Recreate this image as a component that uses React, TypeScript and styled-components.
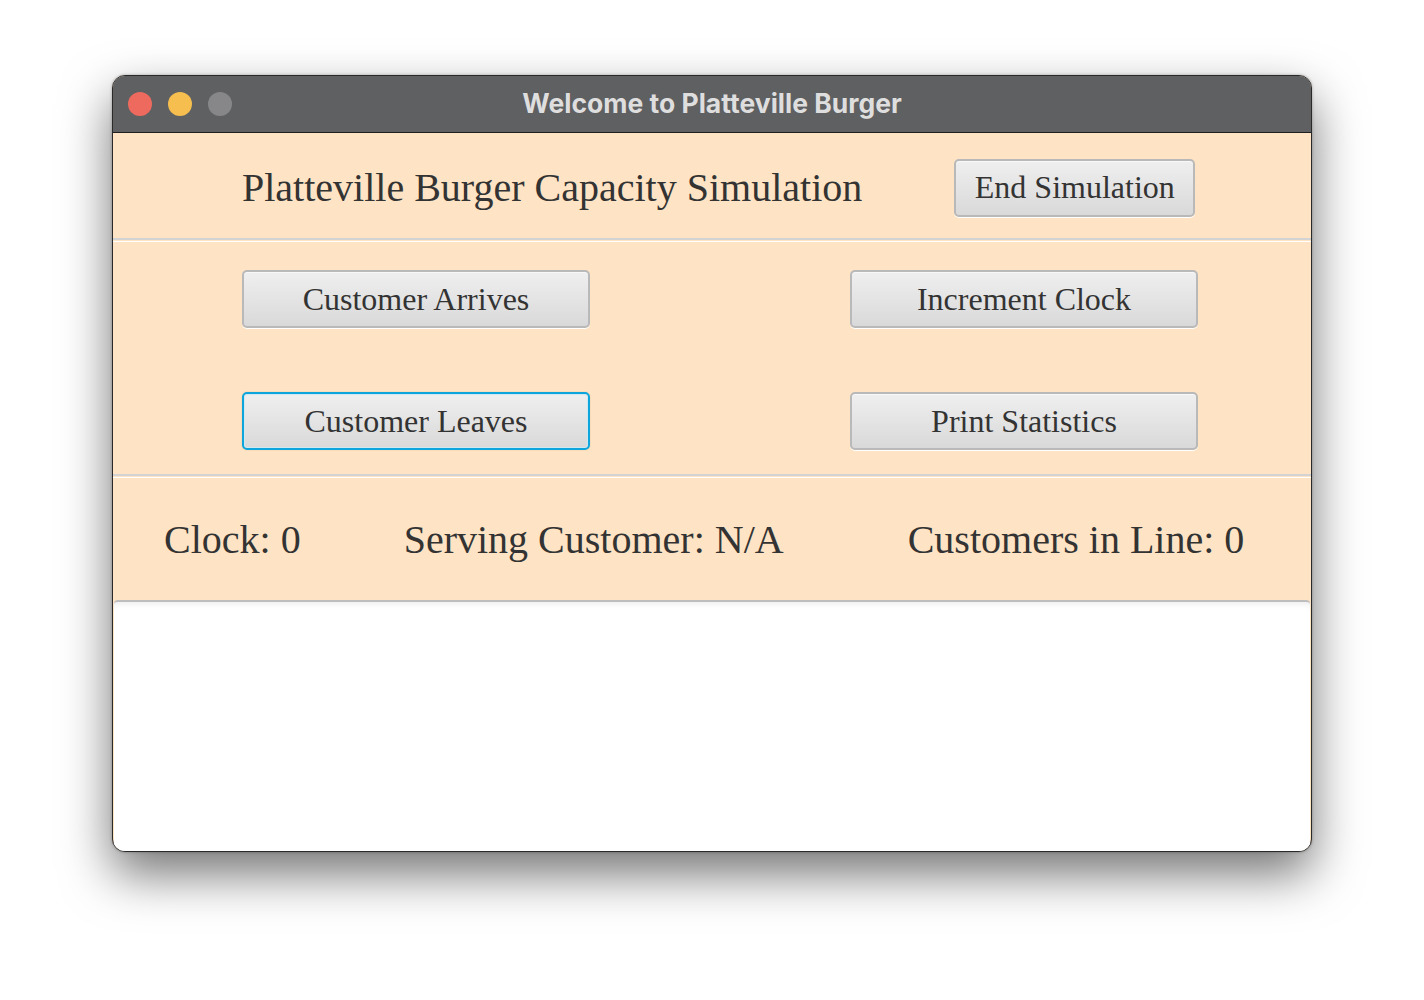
import React from "react";
import styled, { createGlobalStyle } from "styled-components";

const Global = createGlobalStyle`
  html, body { margin: 0; padding: 0; background: #ffffff; }
  #root { width: 1424px; height: 1000px; }
`;

const Stage = styled.div`
  width: 1424px;
  height: 1000px;
  box-sizing: border-box;
  padding: 75px 112px 0 112px;
  background: #ffffff;
`;

const Window = styled.div`
  width: 1200px;
  height: 777px;
  box-sizing: border-box;
  border: 1px solid #2a2a2a;
  border-radius: 13px;
  overflow: hidden;
  display: flex;
  flex-direction: column;
  background: #fee3c4;
  box-shadow: 0 22px 50px rgba(0, 0, 0, 0.55), 0 0 3px rgba(0, 0, 0, 0.3);
`;

const TitleBar = styled.div`
  height: 56px;
  flex: none;
  background: #5f6062;
  border-bottom: 1px solid #1e1e1e;
  display: flex;
  align-items: center;
  position: relative;
  padding-left: 15px;
  gap: 16px;
`;

const Light = styled.span<{ $c: string }>`
  width: 24px;
  height: 24px;
  border-radius: 50%;
  background: ${(p) => p.$c};
`;

const Title = styled.div`
  position: absolute;
  left: 0;
  right: 0;
  top: 0;
  bottom: 0;
  display: flex;
  align-items: center;
  justify-content: center;
  font-family: Inter, "Open Sans", sans-serif;
  font-weight: 700;
  font-size: 26.5px;
  color: #dedede;
  padding-bottom: 2px;
`;

const serif = `"Liberation Serif", "Times New Roman", serif`;

const HeaderRow = styled.div`
  height: 105px;
  flex: none;
  box-sizing: border-box;
  display: flex;
  align-items: center;
  padding: 4px 0 0 129px;
`;

const Heading = styled.div`
  font-family: ${serif};
  font-size: 40px;
  color: #333333;
  margin-right: 92px;
`;

const Separator = styled.div`
  height: 1px;
  flex: none;
  border-top: 2px solid #d3d3d3;
  border-bottom: 1px solid #ffffff;
  box-sizing: content-box;
`;

const ButtonGrid = styled.div`
  height: 232px;
  flex: none;
  box-sizing: border-box;
  padding: 28px 0 0 129px;
  display: grid;
  grid-template-columns: 348px 348px;
  grid-template-rows: 58px 58px;
  column-gap: 260px;
  row-gap: 64px;
`;

const Button = styled.button<{ $w?: number; $focused?: boolean }>`
  width: ${(p) => (p.$w ? `${p.$w}px` : "100%")};
  height: 58px;
  box-sizing: border-box;
  font-family: ${serif};
  font-size: 32px;
  color: #333333;
  border-radius: 5px;
  border: ${(p) => (p.$focused ? "2px solid #0ea4dc" : "2px solid #b9b9b9")};
  background: linear-gradient(#efefef, #d9d9d9);
  box-shadow: ${(p) =>
    p.$focused
      ? "inset 0 0 0 1px #cfe9f3, 0 0 0 1px #f6dcb8"
      : "inset 0 1px 0 #f8f8f8, 0 1px 0 #ffffff"};
  padding: 0;
  display: flex;
  align-items: center;
  justify-content: center;
  cursor: default;
`;

const StatusRow = styled.div`
  height: 122px;
  flex: none;
  display: flex;
  align-items: center;
  padding-left: 51px;
  box-sizing: border-box;
`;

const Stat = styled.div<{ $gap: number }>`
  font-family: ${serif};
  font-size: 40px;
  color: #333333;
  margin-right: ${(p) => p.$gap}px;
  white-space: nowrap;
`;

const OutputArea = styled.div`
  flex: 1;
  margin: 0 1px;
  background: #ffffff;
  border-top: 2px solid #bdbdbd;
  border-radius: 4px 4px 0 0;
  box-shadow: inset 0 6px 6px -4px rgba(0, 0, 0, 0.08);
`;

export default function App() {
  return (
    <>
      <Global />
      <Stage>
        <Window>
          <TitleBar>
            <Light $c="#ee6a5f" />
            <Light $c="#f5be4f" />
            <Light $c="#87878a" />
            <Title>Welcome to Platteville Burger</Title>
          </TitleBar>
          <HeaderRow>
            <Heading>Platteville Burger Capacity Simulation</Heading>
            <Button $w={241}>End Simulation</Button>
          </HeaderRow>
          <Separator />
          <ButtonGrid>
            <Button>Customer Arrives</Button>
            <Button>Increment Clock</Button>
            <Button $focused>Customer Leaves</Button>
            <Button>Print Statistics</Button>
          </ButtonGrid>
          <Separator />
          <StatusRow>
            <Stat $gap={103}>Clock: 0</Stat>
            <Stat $gap={124}>Serving Customer: N/A</Stat>
            <Stat $gap={0}>Customers in Line: 0</Stat>
          </StatusRow>
          <OutputArea />
        </Window>
      </Stage>
    </>
  );
}
